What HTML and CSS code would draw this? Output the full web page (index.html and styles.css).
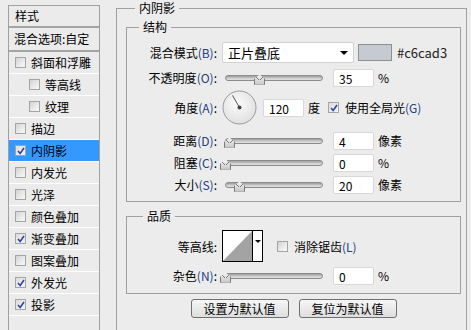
FILE: index.html
```html
<!DOCTYPE html>
<html lang="zh-CN">
<head>
    <meta charset="UTF-8">
    <title>图层样式 - 内阴影</title>
    <link rel="stylesheet" href="styles.css">
</head>
<body>
    <div class="dialog">
        <!-- 样式列表 -->
        <aside class="style-list">
            <div class="list-head">样式</div>
            <div class="list-blend">混合选项:自定</div>
            <div class="list-item"><span class="cb"></span>斜面和浮雕</div>
            <div class="list-item sub"><span class="cb"></span>等高线</div>
            <div class="list-item sub"><span class="cb"></span>纹理</div>
            <div class="list-item"><span class="cb"></span>描边</div>
            <div class="list-item active"><span class="cb checked"><svg viewBox="0 0 8 8" width="8" height="8"><path d="M1 4 L3.2 6.5 L7 1" fill="none" stroke="#2c46a6" stroke-width="1.6"/></svg></span>内阴影</div>
            <div class="list-item"><span class="cb"></span>内发光</div>
            <div class="list-item"><span class="cb"></span>光泽</div>
            <div class="list-item"><span class="cb"></span>颜色叠加</div>
            <div class="list-item"><span class="cb checked"><svg viewBox="0 0 8 8" width="8" height="8"><path d="M1 4 L3.2 6.5 L7 1" fill="none" stroke="#2c46a6" stroke-width="1.6"/></svg></span>渐变叠加</div>
            <div class="list-item"><span class="cb"></span>图案叠加</div>
            <div class="list-item"><span class="cb checked"><svg viewBox="0 0 8 8" width="8" height="8"><path d="M1 4 L3.2 6.5 L7 1" fill="none" stroke="#2c46a6" stroke-width="1.6"/></svg></span>外发光</div>
            <div class="list-item"><span class="cb checked"><svg viewBox="0 0 8 8" width="8" height="8"><path d="M1 4 L3.2 6.5 L7 1" fill="none" stroke="#2c46a6" stroke-width="1.6"/></svg></span>投影</div>
        </aside>

        <!-- 内阴影 -->
        <section class="group outer">
            <span class="group-title">内阴影</span>

            <div class="group structure">
                <span class="group-title">结构</span>

                <div class="row row-blend">
                    <label class="lbl">混合模式<span class="key">(B)</span>:</label>
                    <div class="select">正片叠底<span class="arrow"></span></div>
                    <span class="swatch"></span>
                    <span class="hex">#c6cad3</span>
                </div>

                <div class="row row-opacity">
                    <label class="lbl">不透明度<span class="key">(O)</span>:</label>
                    <div class="slider"><span class="thumb" style="left: 34px"></span></div>
                    <span class="field">35</span>
                    <span class="unit">%</span>
                </div>

                <div class="row row-angle">
                    <label class="lbl">角度<span class="key">(A)</span>:</label>
                    <svg class="dial" width="35" height="35" viewBox="0 0 35 35">
                        <defs>
                            <radialGradient id="dialFill" cx="45%" cy="40%" r="65%">
                                <stop offset="0" stop-color="#fbfbfb"/>
                                <stop offset="1" stop-color="#dedede"/>
                            </radialGradient>
                        </defs>
                        <circle cx="17.5" cy="17.5" r="16.5" fill="url(#dialFill)" stroke="#9a9a9a"/>
                        <line x1="17.5" y1="17.5" x2="10.5" y2="5.4" stroke="#555" stroke-width="1"/>
                        <circle cx="17.5" cy="17.5" r="2" fill="#444"/>
                    </svg>
                    <span class="field angle-field">120</span>
                    <span class="unit deg">度</span>
                    <span class="cb checked global"><svg viewBox="0 0 8 8" width="8" height="8"><path d="M1 4 L3.2 6.5 L7 1" fill="none" stroke="#2c46a6" stroke-width="1.6"/></svg></span>
                    <span class="cb-text">使用全局光<span class="key">(G)</span></span>
                </div>

                <div class="row row-distance">
                    <label class="lbl">距离<span class="key">(D)</span>:</label>
                    <div class="slider"><span class="thumb" style="left: 4px"></span></div>
                    <span class="field">4</span>
                    <span class="unit">像素</span>
                </div>

                <div class="row row-choke">
                    <label class="lbl">阻塞<span class="key">(C)</span>:</label>
                    <div class="slider"><span class="thumb" style="left: 0px"></span></div>
                    <span class="field">0</span>
                    <span class="unit">%</span>
                </div>

                <div class="row row-size">
                    <label class="lbl">大小<span class="key">(S)</span>:</label>
                    <div class="slider"><span class="thumb" style="left: 14px"></span></div>
                    <span class="field">20</span>
                    <span class="unit">像素</span>
                </div>
            </div>

            <div class="group quality">
                <span class="group-title">品质</span>

                <div class="row row-contour">
                    <label class="lbl">等高线:</label>
                    <div class="contour">
                        <svg class="curve" width="29" height="30" viewBox="0 0 29 30">
                            <polygon points="0,30 29,0 29,30" fill="#a3a3a3"/>
                        </svg>
                        <span class="contour-drop"><span class="arrow"></span></span>
                    </div>
                    <span class="cb antialias"></span>
                    <span class="cb-text">消除锯齿<span class="key">(L)</span></span>
                </div>

                <div class="row row-noise">
                    <label class="lbl">杂色<span class="key">(N)</span>:</label>
                    <div class="slider"><span class="thumb" style="left: 0px"></span></div>
                    <span class="field">0</span>
                    <span class="unit">%</span>
                </div>
            </div>

            <div class="buttons">
                <button class="btn">设置为默认值</button>
                <button class="btn">复位为默认值</button>
            </div>
        </section>
    </div>
</body>
</html>
```

FILE: styles.css
```css
* {
    margin: 0;
    padding: 0;
    box-sizing: border-box;
}

body {
    width: 471px;
    height: 330px;
    overflow: hidden;
    background: #ececec;
    font-family: "Noto Sans CJK SC", "Liberation Sans", sans-serif;
    font-size: 12px;
    color: #000;
}

.dialog {
    display: flex;
    align-items: flex-start;
    gap: 16px;
    padding: 5px 0 0 8px;
}

/* 样式列表 (continues below the window edge) */
.style-list {
    width: 92px;
    height: 325px;
    border: 1px solid #a0a0a0;
    border-bottom: none;
    background: #ebebeb;
}

.list-head {
    height: 22px;
    line-height: 19px;
    padding-left: 6px;
    border-bottom: 2px solid #a3a3a3;
}

.list-blend {
    height: 24px;
    line-height: 22px;
    padding-left: 5px;
    border-bottom: 2px solid #a3a3a3;
}

.list-item {
    display: flex;
    align-items: center;
    height: 22px;
    padding-left: 6px;
    border-bottom: 1px solid #fff;
}

.list-item.sub {
    padding-left: 20px;
}

.list-item.active {
    background: #3399ff;
}

.list-item .cb {
    margin-right: 5px;
}

/* 复选框 */
.cb {
    display: inline-flex;
    align-items: center;
    justify-content: center;
    flex: none;
    width: 11px;
    height: 11px;
    border: 1px solid #a4a4a4;
    background: linear-gradient(135deg, #d2d2d2 0%, #ececec 60%, #f8f8f8 100%);
}

.cb.checked {
    background: linear-gradient(135deg, #dcdcdc 0%, #f4f4f4 100%);
}

/* 分组框 */
.group {
    position: relative;
    border: 1px solid #a0a0a0;
}

.group-title {
    position: absolute;
    top: -9px;
    line-height: 16px;
    padding: 0 4px;
    background: #ececec;
}

.outer {
    width: 351px;
    height: 322px;
    margin-top: 3px;
    padding: 18px 5px 0 9px;
    border-bottom: none;
}

.outer > .group-title {
    left: 18px;
}

.structure {
    padding: 14px 0 7px;
}

.structure > .group-title {
    left: 12px;
}

.quality {
    margin-top: 14px;
    padding: 13px 0 8px;
}

.quality > .group-title {
    left: 16px;
}

/* 行 */
.row {
    display: flex;
    align-items: center;
    height: 19px;
}

.lbl {
    width: 90px;
    margin-right: 5px;
    text-align: right;
    white-space: nowrap;
}

.key {
    color: #23407c;
}

.row-blend {
    height: 21px;
}

.row-opacity {
    margin-top: 5px;
}

.row-angle {
    height: 35px;
    margin-top: 3px;
}

.row-distance {
    margin-top: 6px;
}

.row-choke,
.row-size {
    margin-top: 3px;
}

.row-contour {
    height: 32px;
}

.row-noise {
    margin-top: 4px;
}

/* 下拉框 */
.select {
    position: relative;
    width: 132px;
    height: 21px;
    line-height: 19px;
    padding-left: 5px;
    background: #fff;
    border: 1px solid #d2d2d2;
    border-radius: 2px;
    font-size: 13px;
}

.arrow {
    display: block;
    width: 0;
    height: 0;
    border-left: 4px solid transparent;
    border-right: 4px solid transparent;
    border-top: 4px solid #000;
}

.select .arrow {
    position: absolute;
    right: 5px;
    top: 8px;
}

.swatch {
    width: 34px;
    height: 17px;
    margin-left: 4px;
    background: #c6cad3;
    border: 1px solid #8f8f8f;
}

.hex {
    margin-left: 5px;
    font-size: 13px;
    color: #222;
}

/* 滑块 */
.slider {
    position: relative;
    width: 98px;
    height: 6px;
    margin-left: 3px;
    border: 1px solid #8c8c8c;
    border-radius: 3px;
    background: linear-gradient(#9c9c9c, #cfcfcf 60%, #e2e2e2);
}

.thumb {
    position: absolute;
    top: -1px;
    width: 11px;
    height: 10px;
    margin-left: -6px;
    background: linear-gradient(#f2f2f2, #cacaca);
    border: 1px solid #7a7a7a;
    border-top: none;
    clip-path: polygon(50% 0, 100% 45%, 100% 100%, 0 100%, 0 45%);
}

.thumb::before {
    content: "";
    position: absolute;
    left: -1px;
    right: -1px;
    top: 0;
    height: 5px;
    background: linear-gradient(to bottom right, transparent 46%, #7a7a7a 47%, #7a7a7a 56%, transparent 57%) right / 50% 100% no-repeat,
                linear-gradient(to bottom left, transparent 46%, #7a7a7a 47%, #7a7a7a 56%, transparent 57%) left / 50% 100% no-repeat;
}

/* 输入框 */
.field {
    width: 41px;
    height: 18px;
    line-height: 17px;
    margin-left: 10px;
    padding-left: 5px;
    background: #fff;
    border: 1px solid #d8d8d8;
    border-radius: 2px;
}

.unit {
    margin-left: 4px;
}

.dial {
    flex: none;
}

.angle-field {
    margin-left: 6px;
}

.unit.deg {
    margin-left: 4px;
}

.cb.global {
    margin-left: 8px;
}

.cb-text {
    margin-left: 6px;
}

/* 等高线 */
.contour {
    display: flex;
    width: 41px;
    height: 32px;
    border: 1px solid #000;
    background: #fff;
}

.curve {
    display: block;
    flex: none;
}

.contour-drop {
    flex: 1;
    display: flex;
    justify-content: center;
    padding-top: 9px;
    border-left: 1px solid #000;
}

.contour-drop .arrow {
    border-left-width: 3px;
    border-right-width: 3px;
    border-top-width: 3px;
}

.cb.antialias {
    margin-left: 14px;
}

/* 按钮 */
.buttons {
    display: flex;
    justify-content: center;
    gap: 10px;
    margin-top: 5px;
}

.btn {
    width: 98px;
    height: 19px;
    font-family: inherit;
    font-size: 12px;
    line-height: 16px;
    color: #000;
    background: linear-gradient(#f6f6f6, #dedede);
    border: 1px solid #707070;
    border-radius: 3px;
}
```
